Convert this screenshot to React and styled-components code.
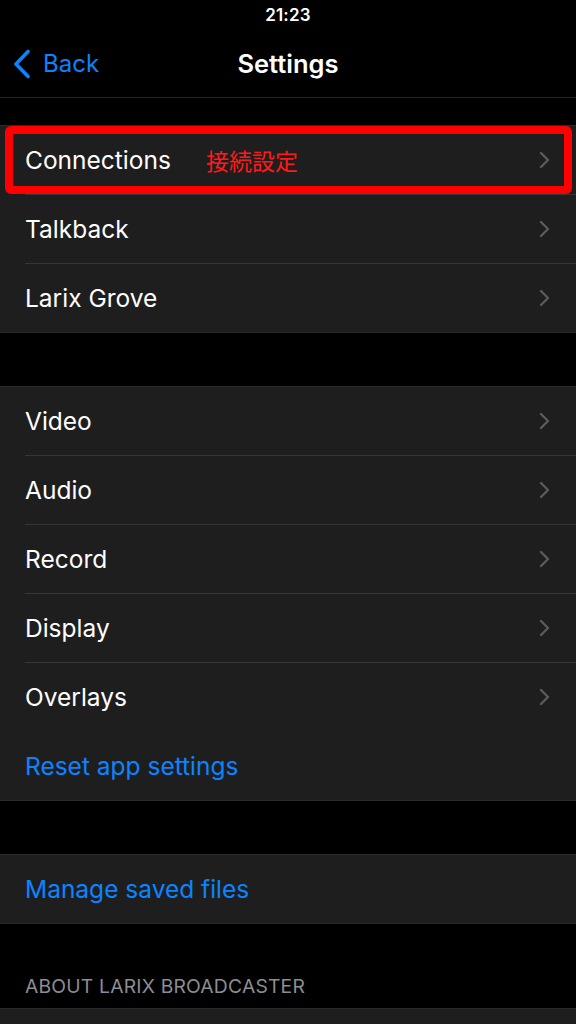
import React from "react";
import styled, { createGlobalStyle } from "styled-components";

const GlobalStyle = createGlobalStyle`
  html, body {
    margin: 0;
    padding: 0;
    background: #000;
  }
  body {
    font-family: Inter, "Noto Sans", "Noto Sans CJK JP", sans-serif;
    -webkit-font-smoothing: antialiased;
  }
`;

const Screen = styled.div`
  width: 576px;
  height: 1024px;
  overflow: hidden;
  background: #000;
  color: #fff;
`;

const StatusBar = styled.div`
  height: 30px;
  display: flex;
  align-items: center;
  justify-content: center;
  font-size: 17px;
  font-weight: 600;
  letter-spacing: 0.2px;
`;

const NavBar = styled.div`
  height: 67px;
  display: grid;
  grid-template-columns: 1fr auto 1fr;
  align-items: center;
  border-bottom: 1px solid #262628;
`;

const BackButton = styled.div`
  display: flex;
  align-items: center;
  gap: 12px;
  padding-left: 13px;
  color: #0a84ff;
  font-size: 24px;
`;

const Title = styled.div`
  font-size: 25.5px;
  font-weight: 600;
`;

const Gap = styled.div`
  height: ${(p) => p.h}px;
`;

const Group = styled.div`
  background: #1e1e1f;
  border-top: 1px solid #2a2a2c;
  border-bottom: 1px solid #2a2a2c;
`;

const Row = styled.div`
  position: relative;
  height: 68px;
  display: flex;
  align-items: center;
  padding: 0 26px 0 25px;
  font-size: 24.5px;
  color: ${(p) => (p.link ? "#0a84ff" : "#fff")};
  & + & {
    border-top: 1px solid transparent;
  }
  & + &::before {
    content: "";
    position: absolute;
    top: -1px;
    left: 25px;
    right: 0;
    height: 1px;
    background: #363638;
  }
`;

const Label = styled.span`
  flex: 1;
  display: flex;
  align-items: center;
`;

const Note = styled.span`
  margin-left: 35px;
  color: #ff1a1a;
  font-family: "Noto Sans CJK JP", sans-serif;
  font-size: 23px;
`;

const Highlight = styled.div`
  position: absolute;
  top: 0;
  bottom: 0;
  left: 5px;
  right: 4px;
  border: 8px solid #ff0000;
  border-radius: 6px;
  pointer-events: none;
`;

const SectionHeader = styled.div`
  height: 84px;
  display: flex;
  align-items: flex-end;
  padding: 0 0 10px 25px;
  box-sizing: border-box;
  color: #8d8d92;
  font-size: 19.3px;
  text-transform: uppercase;
  letter-spacing: 0.2px;
`;

const Chevron = () => (
  <svg width="11" height="18" viewBox="0 0 11 18">
    <path d="M2 2 L9 9 L2 16" fill="none" stroke="#5b5b5e" strokeWidth="2.4" strokeLinecap="round" strokeLinejoin="round" />
  </svg>
);

const BackChevron = () => (
  <svg width="18" height="30" viewBox="0 0 18 30">
    <path d="M15 2.5 L3 15 L15 27.5" fill="none" stroke="#0a84ff" strokeWidth="3.6" strokeLinecap="round" strokeLinejoin="round" />
  </svg>
);

function Item({ label, note, link, highlight }) {
  return (
    <Row link={link}>
      <Label>
        {label}
        {note && <Note>{note}</Note>}
      </Label>
      {!link && label && <Chevron />}
      {highlight && <Highlight />}
    </Row>
  );
}

export default function App() {
  return (
    <Screen>
      <GlobalStyle />
      <StatusBar>21:23</StatusBar>
      <NavBar>
        <BackButton>
          <BackChevron />
          Back
        </BackButton>
        <Title>Settings</Title>
        <div />
      </NavBar>
      <Gap h={27} />
      <Group>
        <Item label="Connections" note="接続設定" highlight />
        <Item label="Talkback" />
        <Item label="Larix Grove" />
      </Group>
      <Gap h={53} />
      <Group>
        <Item label="Video" />
        <Item label="Audio" />
        <Item label="Record" />
        <Item label="Display" />
        <Item label="Overlays" />
        <Item label="Reset app settings" link />
      </Group>
      <Gap h={53} />
      <Group>
        <Item label="Manage saved files" link />
      </Group>
      <SectionHeader>About Larix Broadcaster</SectionHeader>
      <Group>
        <Item />
      </Group>
    </Screen>
  );
}
